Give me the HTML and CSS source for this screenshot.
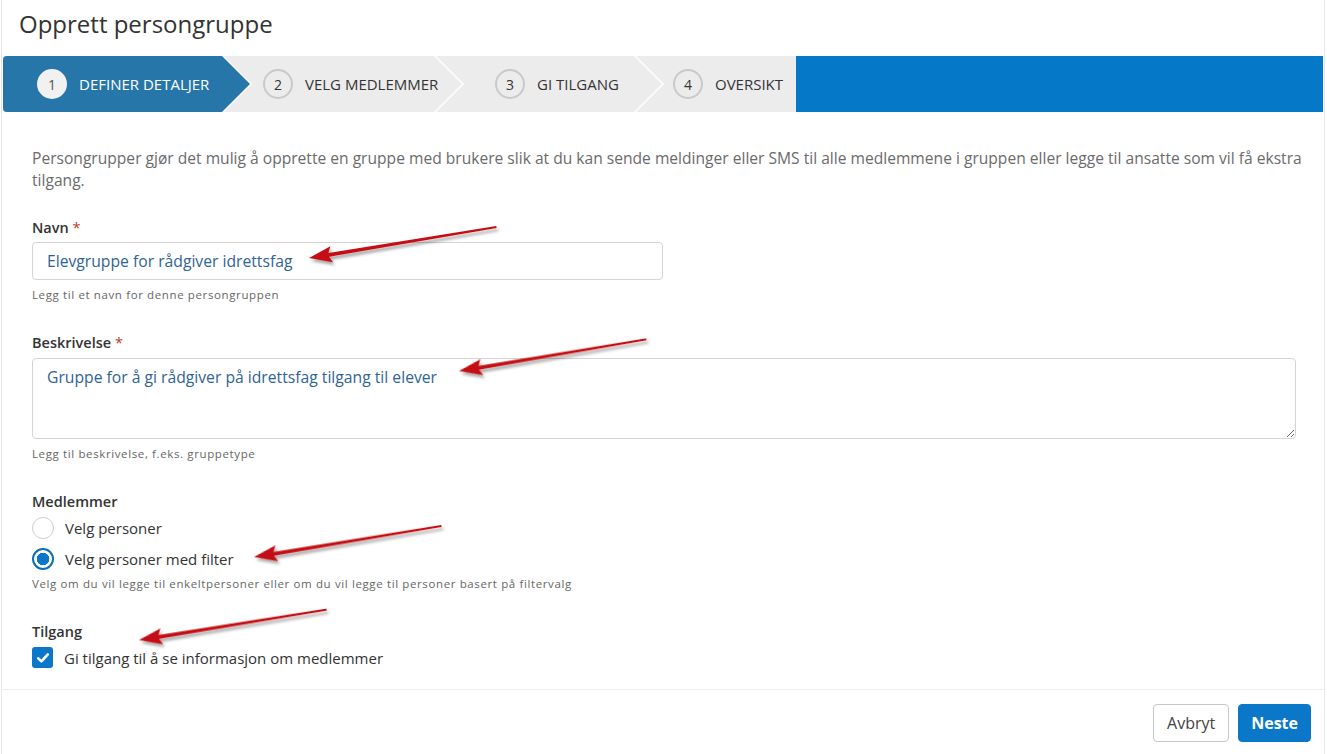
FILE: index.html
```html
<!DOCTYPE html>
<html lang="nb">
<head>
    <meta charset="UTF-8">
    <meta name="viewport" content="width=device-width, initial-scale=1.0">
    <title>Opprett persongruppe</title>
    <link rel="stylesheet" href="styles.css">
</head>
<body>
    <div class="modal">
        <header class="modal-header">
            <h1>Opprett persongruppe</h1>
        </header>

        <!-- Stegindikator -->
        <div class="stepper">
            <div class="steps">
                <div class="step active"><span class="step-num">1</span>DEFINER DETALJER</div>
                <div class="step"><span class="step-num">2</span>VELG MEDLEMMER</div>
                <div class="step"><span class="step-num">3</span>GI TILGANG</div>
                <div class="step"><span class="step-num">4</span>OVERSIKT</div>
            </div>
        </div>

        <div class="modal-body">
            <p class="intro">Persongrupper gjør det mulig å opprette en gruppe med brukere slik at du kan sende meldinger eller SMS til alle medlemmene i gruppen eller legge til ansatte som vil få ekstra tilgang.</p>

            <div class="field">
                <label class="field-label" for="navn">Navn <span class="req">*</span></label>
                <input type="text" id="navn" class="field-input" value="Elevgruppe for rådgiver idrettsfag">
                <div class="help">Legg til et navn for denne persongruppen</div>
            </div>

            <div class="field">
                <label class="field-label" for="beskrivelse">Beskrivelse <span class="req">*</span></label>
                <textarea id="beskrivelse" class="field-input field-area">Gruppe for å gi rådgiver på idrettsfag tilgang til elever</textarea>
                <div class="help">Legg til beskrivelse, f.eks. gruppetype</div>
            </div>

            <div class="field">
                <div class="field-label tight">Medlemmer</div>
                <label class="choice"><span class="radio"></span>Velg personer</label>
                <label class="choice"><span class="radio checked"></span>Velg personer med filter</label>
                <div class="help after-choice">Velg om du vil legge til enkeltpersoner eller om du vil legge til personer basert på filtervalg</div>
            </div>

            <div class="field">
                <div class="field-label tight">Tilgang</div>
                <label class="choice">
                    <span class="checkbox">
                        <svg width="14" height="14" viewBox="0 0 14 14"><path d="M2.2 7.4 L5.4 10.4 L11.8 3.4" fill="none" stroke="#fff" stroke-width="2.6" stroke-linecap="round" stroke-linejoin="round"/></svg>
                    </span>
                    Gi tilgang til å se informasjon om medlemmer
                </label>
            </div>
        </div>

        <footer class="modal-footer">
            <button class="btn">Avbryt</button>
            <button class="btn btn-primary">Neste</button>
        </footer>
    </div>

    <!-- Røde piler lagt over skjermbildet -->
    <svg class="annotations" width="1327" height="754" viewBox="0 0 1327 754">
        <defs>
            <filter id="skygge" x="-10%" y="-50%" width="130%" height="250%">
                <feDropShadow dx="2" dy="3" stdDeviation="1.8" flood-color="#000" flood-opacity="0.35"/>
            </filter>
            <path id="pil" d="M0 0 L23 -8 L20 -1.7 L190 -1.1 L190 1.1 L20 2 L23 8 Z" fill="#c40f12"/>
        </defs>
        <g filter="url(#skygge)">
            <use href="#pil" transform="translate(309 258) rotate(-9.4)"/>
            <use href="#pil" transform="translate(459 371) rotate(-9.6)"/>
            <use href="#pil" transform="translate(254 557) rotate(-9.4)"/>
            <use href="#pil" transform="translate(139 640) rotate(-9.2)"/>
        </g>
    </svg>
</body>
</html>
```

FILE: styles.css
```css
body {
    font-family: 'Open Sans', sans-serif;
    background-color: #fff;
    color: #333;
    margin: 0;
    padding: 0;
    position: relative;
    height: 754px;
    overflow: hidden;
}
.modal {
    margin: 0 2px 0 1px;
    border-left: 1px solid #e8e8e8;
    border-right: 1px solid #e8e8e8;
    min-height: 754px;
}
.modal-header {
    height: 56px;
    padding: 0 17px;
}
.modal-header h1 {
    margin: 0;
    padding-top: 9px;
    font-size: 24px;
    font-weight: 400;
    line-height: 30px;
    color: #333;
}
.stepper {
    display: flex;
    height: 56px;
    margin: 0 1px;
    background-color: #0678c8;
    border-radius: 4px 0 0 4px;
    overflow: hidden;
}
.steps {
    display: flex;
    background-color: #fff;
}
.step {
    flex: 0 0 auto;
    display: flex;
    align-items: center;
    gap: 12px;
    box-sizing: border-box;
    margin-left: -26px;
    background-color: #ececed;
    color: #333;
    font-size: 15px;
    clip-path: polygon(0 0, calc(100% - 28px) 0, 100% 50%, calc(100% - 28px) 100%, 0 100%, 28px 50%);
}
.step:nth-child(1) {
    width: 247px;
    padding-left: 34px;
    margin-left: 0;
    clip-path: polygon(0 0, calc(100% - 28px) 0, 100% 50%, calc(100% - 28px) 100%, 0 100%);
}
.step:nth-child(2) {
    width: 238px;
    padding-left: 39px;
}
.step:nth-child(3) {
    width: 226px;
    padding-left: 59px;
}
.step:nth-child(4) {
    width: 160px;
    padding-left: 37px;
    clip-path: polygon(0 0, 100% 0, 100% 100%, 0 100%, 28px 50%);
}
.step.active {
    background-color: #2676a9;
    color: #fff;
}
.step-num {
    width: 30px;
    height: 30px;
    box-sizing: border-box;
    border: 2px solid #c9c9c9;
    border-radius: 50%;
    display: flex;
    align-items: center;
    justify-content: center;
    font-size: 14px;
    color: #333;
    flex: 0 0 auto;
}
.step.active .step-num {
    background-color: #f1f1f1;
    border-color: #f1f1f1;
    color: #555;
}
.modal-body {
    padding: 35px 4px 16px 30px;
    border-bottom: 1px solid #eee;
}
.intro {
    margin: 0 0 27px 0;
    font-size: 15.6px;
    line-height: 22px;
    color: #6b6b6b;
}
.field {
    margin-bottom: 30px;
}
.field:last-child {
    margin-bottom: 0;
}
.field-label {
    display: block;
    font-size: 14.5px;
    font-weight: 600;
    line-height: 20px;
    color: #333;
    margin-bottom: 4px;
}
.field-label.tight {
    margin-bottom: 0;
}
.req {
    color: #c0392b;
    font-weight: 400;
}
.field-input {
    display: block;
    box-sizing: border-box;
    width: 631px;
    height: 38px;
    padding: 0 14px;
    border: 1px solid #d4d4d4;
    border-radius: 4px;
    font-family: 'Open Sans', sans-serif;
    font-size: 15.7px;
    color: #2f6396;
    background-color: #fff;
}
.field-area {
    width: 1264px;
    height: 81px;
    padding: 7px 14px;
    line-height: 22px;
    resize: vertical;
    margin-top: 5px;
}
.help {
    margin-top: 7px;
    font-size: 11.5px;
    line-height: 16px;
    letter-spacing: 0.62px;
    color: #666;
}
.help.after-choice {
    margin-top: 2px;
}
.choice {
    display: flex;
    align-items: center;
    gap: 11px;
    height: 31px;
    font-size: 15px;
    color: #333;
}
.radio {
    width: 22px;
    height: 22px;
    box-sizing: border-box;
    border: 1px solid #cfcfcf;
    border-radius: 50%;
    background-color: #fff;
    flex: 0 0 auto;
}
.radio.checked {
    border: 2px solid #0a6fb8;
    background: radial-gradient(circle, #0a77c9 0 6px, #fff 6.5px);
}
.checkbox {
    width: 21px;
    height: 21px;
    border-radius: 3px;
    background-color: #0a77c9;
    display: flex;
    align-items: center;
    justify-content: center;
    flex: 0 0 auto;
}
.modal-footer {
    display: flex;
    justify-content: flex-end;
    gap: 9px;
    padding: 14px 13px 12px;
}
.btn {
    height: 38px;
    padding: 0 13px;
    border: 1px solid #c8c8c8;
    border-radius: 4px;
    background-color: #fff;
    color: #444;
    font-family: 'Open Sans', sans-serif;
    font-size: 16px;
    cursor: pointer;
}
.btn-primary {
    background-color: #0a77c9;
    border-color: #0a77c9;
    color: #fff;
    font-weight: 700;
    padding: 0 12px;
}
.annotations {
    position: absolute;
    left: 0;
    top: 0;
    pointer-events: none;
}
```
